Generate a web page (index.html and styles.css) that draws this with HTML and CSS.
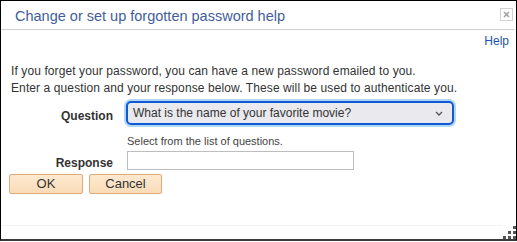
FILE: index.html
```html
<!DOCTYPE html>
<html lang="en">
<head>
<meta charset="utf-8">
<title>Change or set up forgotten password help</title>
<link rel="stylesheet" href="styles.css">
</head>
<body>
<div class="dialog">
  <div class="titlebar">
    <span class="title">Change or set up forgotten password help</span>
    <span class="close" aria-label="Close">
      <svg width="11" height="11" viewBox="0 0 11 11"><path d="M3 3 L8 8 M8 3 L3 8" stroke="#a0a0a0" stroke-width="1.6"/></svg>
    </span>
  </div>
  <div class="helprow"><a class="help" href="#">Help</a></div>
  <p class="intro">If you forget your password, you can have a new password emailed to you.<br>Enter a question and your response below. These will be used to authenticate you.</p>
  <div class="form">
    <label class="lbl lbl-q">Question</label>
    <div class="select">
      <span class="select-text">What is the name of your favorite movie?</span>
      <svg class="chev" width="8" height="5" viewBox="0 0 8 5"><path d="M1 1 L4 4 L7 1" fill="none" stroke="#555" stroke-width="1.3"/></svg>
    </div>
    <span class="empty"></span>
    <div class="hint">Select from the list of questions.</div>
    <label class="lbl lbl-r">Response</label>
    <div class="input-wrap"><input class="input" type="text"></div>
  </div>
  <div class="buttons">
    <button class="btn btn-ok">OK</button>
    <button class="btn btn-cancel">Cancel</button>
  </div>
  <div class="footer"></div>
  <svg class="grip" width="13" height="13" viewBox="0 0 13 13">
    <rect x="10" y="0" width="3" height="3" fill="#555"/>
    <rect x="5" y="5" width="3" height="3" fill="#555"/>
    <rect x="10" y="5" width="3" height="3" fill="#555"/>
    <rect x="0" y="10" width="3" height="3" fill="#555"/>
    <rect x="5" y="10" width="3" height="3" fill="#555"/>
    <rect x="10" y="10" width="3" height="3" fill="#555"/>
  </svg>
</div>
</body>
</html>
```

FILE: styles.css
```css
html, body {
  margin: 0;
  padding: 0;
  background: #fff;
}
body {
  width: 517px;
  height: 242px;
  font-family: "Liberation Sans", Arial, sans-serif;
  color: #333;
}
.dialog {
  position: relative;
  box-sizing: border-box;
  width: 517px;
  height: 241px;
  border: 1px solid #000;
  border-bottom: 2px solid #3a3a3a;
  display: flex;
  flex-direction: column;
  background: #fff;
}
.titlebar {
  height: 28px;
  border-bottom: 1px solid #cfcfcf;
  margin-right: 2px;
  display: flex;
  justify-content: space-between;
  align-items: flex-start;
  padding: 0 1px 0 14px;
}
.title {
  font-size: 14.5px;
  line-height: 18px;
  padding-top: 6px;
  color: #3f5e98;
}
.close {
  margin-top: 7px;
  box-sizing: border-box;
  width: 13px;
  height: 13px;
  border: 1px solid #d2d2d2;
  display: flex;
  align-items: center;
  justify-content: center;
}
.helprow {
  margin-top: 4px;
  text-align: right;
  padding-right: 7px;
  font-size: 12px;
  line-height: 14px;
}
.help {
  color: #1c55a8;
  text-decoration: none;
}
.intro {
  margin: 15px 0 0;
  padding-left: 10px;
  font-size: 12px;
  line-height: 17px;
  letter-spacing: 0.1px;
  color: #333;
}
.form {
  margin-top: 4px;
  padding-left: 10px;
  display: grid;
  grid-template-columns: 102px 1fr;
  column-gap: 13px;
  align-items: start;
}
.lbl {
  text-align: right;
  font-weight: bold;
  font-size: 12px;
  line-height: 15px;
  color: #333;
}
.lbl-q {
  padding-top: 8px;
}
.lbl-r {
  margin-top: 3px;
  padding-top: 5px;
}
.select {
  box-sizing: border-box;
  width: 328px;
  height: 24px;
  border: 2px solid #0f5ad6;
  border-radius: 5px;
  box-shadow: 0 0 0 2px #b2d6f6;
  background: #e9e9ee;
  display: flex;
  align-items: center;
  justify-content: space-between;
  padding: 0 9px 0 5px;
}
.select-text {
  font-size: 12px;
  line-height: 14px;
  color: #333;
}
.chev {
  display: block;
}
.hint {
  margin: 10px 0 0 1px;
  font-size: 11px;
  line-height: 13px;
  color: #444;
}
.input-wrap {
  margin: 3px 0 0 1px;
}
.input {
  display: block;
  box-sizing: border-box;
  width: 227px;
  height: 19px;
  border: 1px solid #bdbdbd;
  margin: 0;
  padding: 0 3px;
  background: #fff;
}
.buttons {
  margin-top: 3px;
  padding-left: 8px;
  display: flex;
  gap: 6px;
}
.btn {
  box-sizing: border-box;
  height: 20px;
  margin: 0;
  padding: 0;
  border: 1px solid #e1aa79;
  border-radius: 2px;
  background: linear-gradient(#fde9d0, #f9dcb8);
  font-family: "Liberation Sans", Arial, sans-serif;
  font-size: 13px;
  line-height: 18px;
  color: #333;
}
.btn-ok {
  width: 74px;
}
.btn-cancel {
  width: 73px;
}
.footer {
  margin-top: auto;
  height: 13px;
  border-top: 1px solid #f3f3f3;
  margin-right: 14px;
}
.grip {
  position: absolute;
  right: 0;
  bottom: 0;
  display: block;
}
```
